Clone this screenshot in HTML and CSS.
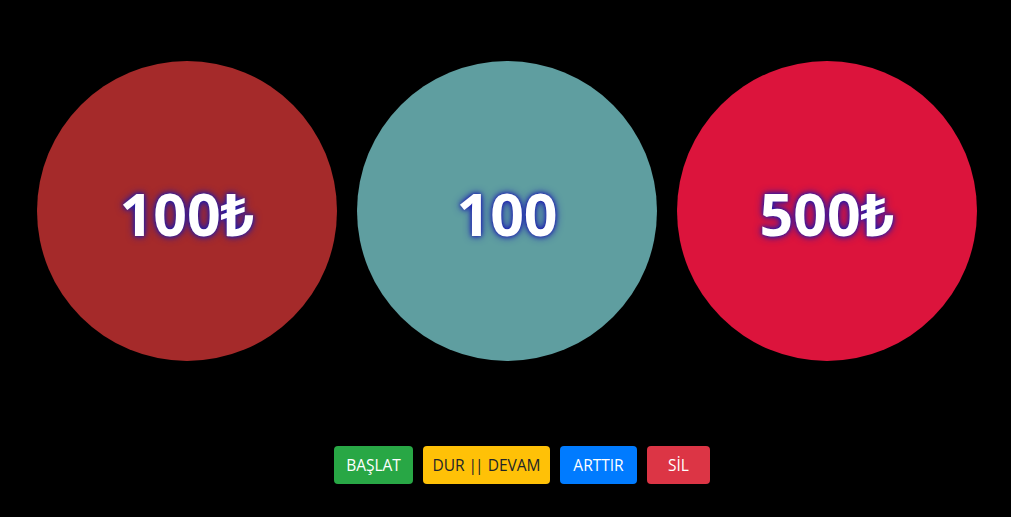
FILE: index.html
```html
<!DOCTYPE html>
<html lang="tr">
<head>
<meta charset="utf-8">
<link rel="stylesheet" href="styles.css">
</head>
<body>
<div class="circles">
  <div class="circle brown"><span class="val">100₺</span></div>
  <div class="circle teal"><span class="val">100</span></div>
  <div class="circle red"><span class="val">500₺</span></div>
</div>
<div class="buttons">
  <button class="btn green">BAŞLAT</button>
  <button class="btn yellow">DUR <span class="bars">||</span> DEVAM</button>
  <button class="btn blue">ARTTIR</button>
  <button class="btn danger">SİL</button>
</div>
</body>
</html>
```
FILE: styles.css
```css
html, body {
  margin: 0;
  padding: 0;
  background: #000;
  font-family: "Open Sans", "Noto Sans", sans-serif;
}
.circles {
  display: flex;
  gap: 20px;
  padding: 61px 0 0 37px;
}
.circle {
  width: 300px;
  height: 300px;
  border-radius: 50%;
  display: flex;
  align-items: center;
  justify-content: center;
}
.brown { background: #a52a2a; }
.teal { background: #5f9ea0; }
.red { background: #dc143c; }
.val {
  color: #fff;
  font-weight: 700;
  font-size: 59px;
  line-height: 1;
  margin-top: 4px;
  text-shadow: 0 0 8px #1a1ab0, 0 0 4px #1a1ab0;
}
.buttons {
  display: flex;
  gap: 10px;
  padding: 85px 0 0 334px;
}
.btn {
  height: 38px;
  border: 0;
  border-radius: 4px;
  font-family: "Open Sans", "Noto Sans", sans-serif;
  font-size: 15.5px;
  padding: 0;
  white-space: nowrap;
  text-align: center;
  color: #fff;
}
.bars { letter-spacing: -2px; margin-right: 2px; }
.green { background: #28a745; width: 79px; }
.yellow { background: #ffc107; color: #212529; width: 127px; }
.blue { background: #007bff; width: 77px; }
.danger { background: #dc3545; width: 63px; }
```
